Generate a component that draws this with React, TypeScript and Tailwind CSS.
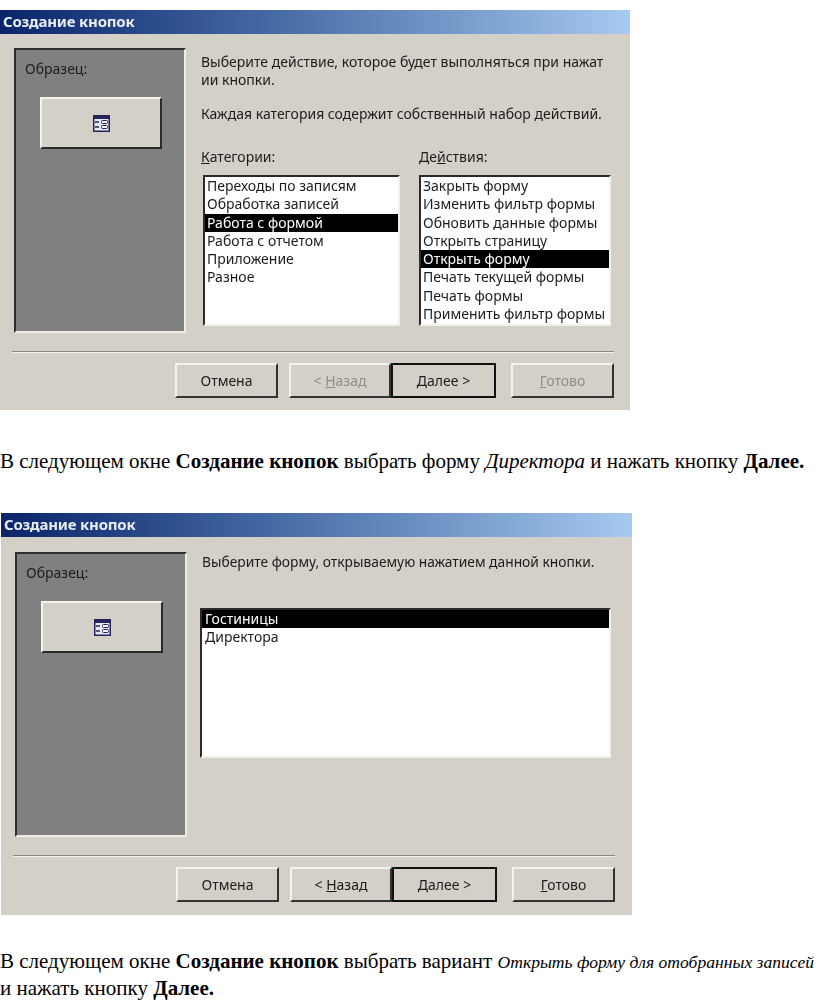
import React from 'react';

interface ListProps {
  items: string[];
  selected: number;
  className: string;
  inset?: string;
}

const ListBox = ({ items, selected, className, inset = 'pl-[2px]' }: ListProps) => (
  <div
    className={`border-2 border-t-[#2a2a2a] border-l-[#2a2a2a] border-r-[#f2f0ea] border-b-[#f2f0ea] bg-white ${className}`}
  >
    {items.map((item, i) => (
      <div
        key={item}
        className={
          i === selected
            ? `h-[18.3px] bg-black leading-[18px] text-white ${inset}`
            : `h-[18.3px] leading-[18px] text-[#1c1c1c] ${inset}`
        }
      >
        {item}
      </div>
    ))}
  </div>
);

const FormIcon = () => (
  <svg width="19" height="19" viewBox="0 0 19 19">
    <rect x="1" y="1" width="17" height="17" fill="#24245a" />
    <rect x="2.5" y="5" width="14" height="11.5" fill="#e4e8f2" />
    <path d="M3 8h4M3 13h4" stroke="#24245a" strokeWidth="1.4" />
    <rect x="9.5" y="6.5" width="6" height="3" rx="1" fill="#f4f6fa" stroke="#24245a" />
    <rect x="9.5" y="11.5" width="6" height="3" rx="1" fill="#f4f6fa" stroke="#24245a" />
  </svg>
);

interface WizButtonProps {
  children: React.ReactNode;
  className: string;
  active?: boolean;
  disabled?: boolean;
}

const WizButton = ({ children, className, active, disabled }: WizButtonProps) => (
  <div
    className={`flex h-[35px] items-center justify-center border-2 bg-[#d4d0c8] ${
      active
        ? 'border-[#111111]'
        : 'border-t-[#f4f2ec] border-l-[#f4f2ec] border-r-[#333333] border-b-[#333333]'
    } ${disabled ? 'text-[#8f8d87]' : 'text-[#1c1c1c]'} ${className}`}
  >
    {children}
  </div>
);

const SamplePanel = () => (
  <div className="h-[285px] w-[172px] shrink-0 border-2 border-t-[#2e2e2e] border-l-[#2e2e2e] border-r-[#eeece6] border-b-[#eeece6] bg-[#808080] pl-[9px] pt-[8px]">
    <div className="text-[#1c1c1c]">Образец:</div>
    <div className="ml-[15px] mt-[18px] flex h-[52px] w-[122px] items-center justify-center border-2 border-t-[#f4f2ec] border-l-[#f4f2ec] border-r-[#2a2a2a] border-b-[#2a2a2a] bg-[#d4d0c8]">
      <FormIcon />
    </div>
  </div>
);

const TitleBar = () => (
  <div className="flex h-[24px] items-center bg-gradient-to-r from-[#0a246a] to-[#a6caf0] pb-[1px] pl-[3px] text-[15px] font-bold tracking-[-0.2px] text-[#e8ecf4]">
    Создание кнопок
  </div>
);

const Footer = ({ ready }: { ready?: boolean }) => (
  <>
    <div className="ml-[12px] mt-[18px] h-[2px] w-[602px] border-t border-b border-t-[#8a8880] border-b-[#f2f0ea]" />
    <div className="mt-[10px] flex pl-[175px]">
      <WizButton className="w-[103px]">Отмена</WizButton>
      <WizButton className="ml-[11px] w-[102px]" disabled={!ready}>
        <span>
          &lt; <span className="underline">Н</span>азад
        </span>
      </WizButton>
      <WizButton className="w-[105px]" active>
        <span>
          <span className="underline">Д</span>алее &gt;
        </span>
      </WizButton>
      <WizButton className="ml-[15px] w-[103px]" disabled={!ready}>
        <span>
          <span className="underline">Г</span>отово
        </span>
      </WizButton>
    </div>
  </>
);

const App = () => {
  return (
    <div className="h-[1000px] w-[816px] overflow-hidden bg-white font-['Noto_Sans',sans-serif] text-[14px]">
      <div className="h-[10px]" />
      <div className="h-[400px] w-[630px] bg-[#d4d0c8] blur-[0.4px]">
        <TitleBar />
        <div className="flex pl-[14px] pt-[14px]">
          <SamplePanel />
          <div className="ml-[15px] pt-[5px]">
            <p className="w-[410px] leading-[18px] text-[#1c1c1c]">
              Выберите действие, которое будет выполняться при нажат
              <br />
              ии кнопки.
            </p>
            <p className="mt-[16px] leading-[18px] text-[#1c1c1c]">
              Каждая категория содержит собственный набор действий.
            </p>
            <div className="mt-[23px] flex text-[#1c1c1c]">
              <span className="w-[218px]">
                <span className="underline">К</span>атегории:
              </span>
              <span>
                Де<span className="underline">й</span>ствия:
              </span>
            </div>
            <div className="mt-[8px] flex">
              <ListBox
                className="ml-[2px] h-[151px] w-[197px]"
                selected={2}
                items={[
                  'Переходы по записям',
                  'Обработка записей',
                  'Работа с формой',
                  'Работа с отчетом',
                  'Приложение',
                  'Разное',
                ]}
              />
              <ListBox
                className="ml-[19px] h-[151px] w-[192px]"
                selected={4}
                items={[
                  'Закрыть форму',
                  'Изменить фильтр формы',
                  'Обновить данные формы',
                  'Открыть страницу',
                  'Открыть форму',
                  'Печать текущей формы',
                  'Печать формы',
                  'Применить фильтр формы',
                ]}
              />
            </div>
          </div>
        </div>
        <Footer />
      </div>

      <p className="mt-[39px] whitespace-nowrap font-['Liberation_Serif',serif] text-[21px] leading-[24px] text-black">
        В следующем окне <b>Создание кнопок</b> выбрать форму <i>Директора</i> и нажать кнопку{' '}
        <b>Далее.</b>
      </p>

      <div className="ml-[1px] mt-[40px] h-[402px] w-[631px] bg-[#d4d0c8] blur-[0.4px]">
        <TitleBar />
        <div className="flex pl-[14px] pt-[15px]">
          <SamplePanel />
          <div className="ml-[15px] pt-[1px]">
            <p className="text-[13.8px] leading-[18px] text-[#1c1c1c]">
              Выберите форму, открываемую нажатием данной кнопки.
            </p>
            <ListBox
              className="-ml-[2px] mt-[37px] h-[150px] w-[411px]"
              inset="pl-[3px]"
              selected={0}
              items={['Гостиницы', 'Директора']}
            />
          </div>
        </div>
        <Footer ready />
      </div>

      <p className="mt-[33px] whitespace-nowrap font-['Liberation_Serif',serif] text-[21px] leading-[26px] text-black">
        В следующем окне <b>Создание кнопок</b> выбрать вариант{' '}
        <i className="text-[17.6px]">Открыть форму для отобранных записей</i>
        <br />и нажать кнопку <b>Далее.</b>
      </p>
    </div>
  );
};

export default App;
